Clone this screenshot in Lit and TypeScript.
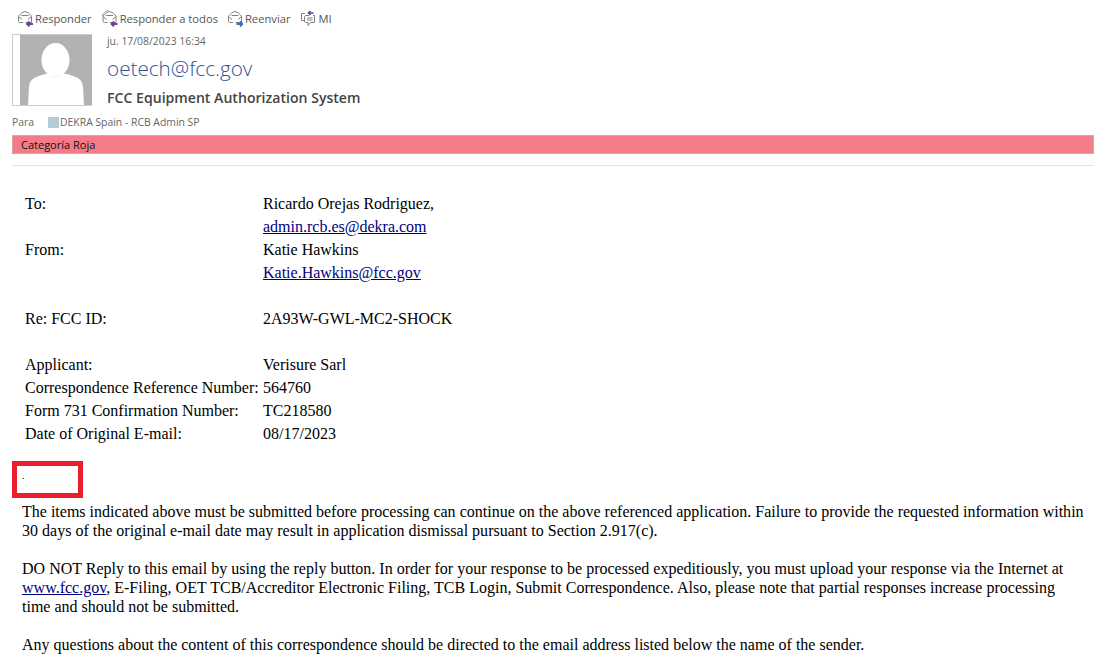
import {LitElement, html, css, svg} from "lit"
import {customElement} from "lit/decorators.js"

const envelope = svg`<path d="M1.5 6.5 C3 4 5 2.2 8 1.5 C11 2.2 13 4 14.5 6.5 V12.5 H8.5 M6 12.5 H3 C2 12.5 1.5 12 1.5 11 V6.5" fill="none" stroke="#808080"/><path d="M1.5 6.5 L5 9.5 M14.5 6.5 L11 9.5 M4.5 5.5 H11.5" fill="none" stroke="#808080"/>`
const backArrow = (color: string) => svg`<path d="M16 14 H10 M12.5 11.5 L10 14 L12.5 16.5" fill="none" stroke="${color}" stroke-width="1.8"/>`
const fwdArrow = (color: string) => svg`<path d="M9.5 14 H15.5 M13 11.5 L15.5 14 L13 16.5" fill="none" stroke="${color}" stroke-width="1.8"/>`

@customElement("app-root")
export class AppRoot extends LitElement {
    static styles = css`
        :host {
            display: block;
            width: 1095px;
            height: 671px;
            overflow: hidden;
            background: #fff;
            font-family: "Open Sans", "Noto Sans", sans-serif;
            color: #444;
        }
        .actions {
            display: flex;
            align-items: center;
            gap: 9px;
            height: 34px;
            padding: 3px 0 0 17px;
            box-sizing: border-box;
            font-size: 11.2px;
            color: #555;
        }
        .action {
            display: flex;
            align-items: center;
            gap: 2px;
        }
        .action svg {
            width: 16px;
            height: 17px;
            display: block;
        }
        .action svg.wide {
            width: 17px;
        }
        .sender {
            display: flex;
            height: 72px;
            margin-left: 12px;
        }
        .photo {
            width: 80px;
            height: 72px;
            flex: none;
            box-sizing: border-box;
            border: 1px solid #ccc;
            border-width: 1px 0 1px 1px;
            padding-left: 7px;
        }
        .photo svg {
            display: block;
            width: 72px;
            height: 70px;
            background: #b2b2b2;
        }
        .who {
            margin-left: 15px;
            display: flex;
            flex-direction: column;
        }
        .date {
            font-size: 10.4px;
            line-height: 14px;
            color: #666;
        }
        .address {
            font-size: 20.7px;
            font-weight: 300;
            line-height: 28px;
            margin-top: 6px;
            color: #2b579a;
        }
        .name {
            font-size: 14.1px;
            font-weight: 600;
            line-height: 20px;
            margin-top: 6px;
            color: #444;
        }
        .to {
            display: flex;
            align-items: center;
            height: 16px;
            margin: 8px 0 0 12px;
            font-size: 10.4px;
            color: #666;
        }
        .swatch {
            width: 11px;
            height: 11px;
            background: #b4ccd8;
            margin: 0 1px 0 14px;
        }
        .category {
            margin: 5px 1px 0 12px;
            height: 19px;
            box-sizing: border-box;
            padding-left: 8px;
            background: #f27d89;
            border: 1px solid #e2a0a8;
            font-size: 11px;
            line-height: 17px;
            color: #111;
        }
        .rule {
            height: 1px;
            background: #e4e4e4;
            margin: 11px 1px 0 12px;
        }
        .body {
            font-family: "Liberation Serif", "Times New Roman", serif;
            font-size: 16px;
            color: #000;
        }
        .meta {
            display: grid;
            grid-template-columns: 238px 1fr;
            grid-auto-rows: 23px;
            line-height: 23px;
            margin: 26px 0 0 25px;
        }
        a {
            color: #00007f;
            text-decoration: underline;
        }
        .marked {
            width: 71px;
            height: 37px;
            box-sizing: border-box;
            margin: 16px 0 0 12px;
            border: 5px solid #e8202e;
            font-size: 10px;
            line-height: 20px;
            padding-left: 5px;
        }
        .copy {
            margin: 4px 10px 0 22px;
            font-size: 16.03px;
            line-height: 19px;
        }
        .copy p {
            margin: 0 0 19px;
        }
    `

    render() {
        return html`
            <div class="actions">
                <span class="action"><svg viewBox="0 0 16 17">${envelope}${backArrow("#6b3fa0")}</svg>Responder</span>
                <span class="action"><svg class="wide" viewBox="0 0 16 17"><path d="M0.5 6 C2 3 4 1 7 0.5" fill="none" stroke="#a0a0a0"/>${envelope}${backArrow("#6b3fa0")}</svg>Responder a todos</span>
                <span class="action"><svg viewBox="0 0 16 17">${envelope}${fwdArrow("#2e75b6")}</svg>Reenviar</span>
                <span class="action"><svg class="wide" viewBox="0 0 17 17"><path d="M5 3.5 H1.5 V10.5 H4" fill="none" stroke="#808080"/><path d="M9 5.5 H6 C5 5.5 4.5 6 4.5 7 V11 C4.5 12 5 12.5 6 12.5 H8 V15.5 L10.5 12.5 H14.5 V5.5 H13" fill="none" stroke="#808080"/><path d="M7 8 H12.5 M7 10 H12.5" stroke="#808080"/><path d="M13.5 3 H8.5 M10.5 1 L8.5 3 L10.5 5" fill="none" stroke="#6b3fa0" stroke-width="1.6"/></svg>MI</span>
            </div>
            <div class="sender">
                <div class="photo">
                    <svg viewBox="0 0 72 70"><ellipse cx="35.5" cy="25" rx="14" ry="17" fill="#fff"/><path d="M8 70 L9 52 C10 44 13 43 22 40 C26 39 29 38 30 40 C33 43 38 43 41 40 C43 38 46 39 50 40 C59 43 62 44 63 52 L64 70 Z" fill="#fff"/></svg>
                </div>
                <div class="who">
                    <div class="date">ju. 17/08/2023 16:34</div>
                    <div class="address">oetech@fcc.gov</div>
                    <div class="name">FCC Equipment Authorization System</div>
                </div>
            </div>
            <div class="to">Para<span class="swatch"></span>DEKRA Spain - RCB Admin SP</div>
            <div class="category">Categoría Roja</div>
            <div class="rule"></div>
            <div class="body">
                <div class="meta">
                    <div>To:</div><div>Ricardo Orejas Rodriguez,</div>
                    <div></div><div><a>admin.rcb.es@dekra.com</a></div>
                    <div>From:</div><div>Katie Hawkins</div>
                    <div></div><div><a>Katie.Hawkins@fcc.gov</a></div>
                    <div></div><div></div>
                    <div>Re: FCC ID:</div><div>2A93W-GWL-MC2-SHOCK</div>
                    <div></div><div></div>
                    <div>Applicant:</div><div>Verisure Sarl</div>
                    <div>Correspondence Reference Number:</div><div>564760</div>
                    <div>Form 731 Confirmation Number:</div><div>TC218580</div>
                    <div>Date of Original E-mail:</div><div>08/17/2023</div>
                </div>
                <div class="marked">.</div>
                <div class="copy">
                    <p>The items indicated above must be submitted before processing can continue on the above referenced application. Failure to provide the requested information within 30 days of the original e-mail date may result in application dismissal pursuant to Section 2.917(c).</p>
                    <p>DO NOT Reply to this email by using the reply button. In order for your response to be processed expeditiously, you must upload your response via the Internet at <a>www.fcc.gov</a>, E-Filing, OET TCB/Accreditor Electronic Filing, TCB Login, Submit Correspondence. Also, please note that partial responses increase processing time and should not be submitted.</p>
                    <p>Any questions about the content of this correspondence should be directed to the email address listed below the name of the sender.</p>
                </div>
            </div>
        `
    }
}
